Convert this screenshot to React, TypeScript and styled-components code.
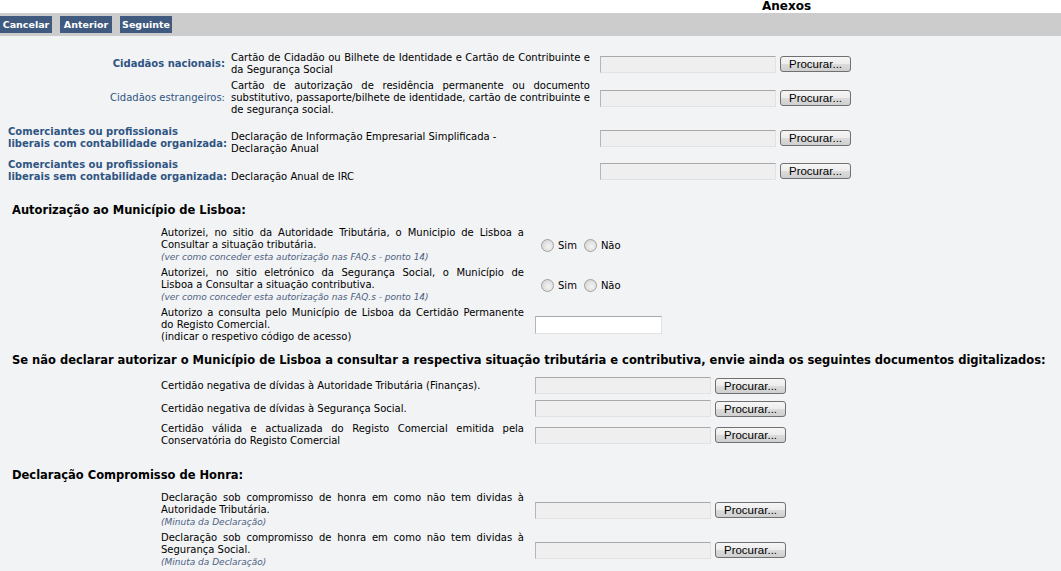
import * as React from "react";
import styled, { createGlobalStyle } from "styled-components";

const GlobalStyle = createGlobalStyle`
  html, body {
    margin: 0;
    padding: 0;
    background: #f2f3f5;
  }
  body {
    font-family: "DejaVu Sans", Verdana, sans-serif;
    font-size: 10px;
    color: #000;
  }
`;

interface DocItem {
  label: string[];
  labelAlign: "left" | "right";
  bold: boolean;
  lines: string[];
  justify: boolean;
  gap: number;
  drop?: number;
}

const DOCS: DocItem[] = [
  {
    label: ["Cidadãos nacionais:"],
    labelAlign: "right",
    bold: true,
    lines: [
      "Cartão de Cidadão ou Bilhete de Identidade e Cartão de Contribuinte e",
      "da Segurança Social",
    ],
    justify: true,
    gap: 0,
  },
  {
    label: ["Cidadãos estrangeiros:"],
    labelAlign: "right",
    bold: false,
    lines: [
      "Cartão de autorização de residência permanente ou documento",
      "substitutivo, passaporte/bilhete de identidade, cartão de contribuinte e",
      "de segurança social.",
    ],
    justify: true,
    gap: 4,
  },
  {
    label: ["Comerciantes ou profissionais", "liberais com contabilidade organizada:"],
    labelAlign: "left",
    bold: true,
    lines: ["Declaração de Informação Empresarial Simplificada -", "Declaração Anual"],
    justify: false,
    gap: 10,
    drop: 5,
  },
  {
    label: ["Comerciantes ou profissionais", "liberais sem contabilidade organizada:"],
    labelAlign: "left",
    bold: true,
    lines: ["Declaração Anual de IRC"],
    justify: false,
    gap: 9,
    drop: 0,
  },
];

const Lines: React.FC<{ lines: string[]; justify: boolean }> = ({ lines, justify }) => (
  <>
    {lines.map((l, i) => (
      <Line key={i} $justify={justify && i < lines.length - 1}>
        {l}
      </Line>
    ))}
  </>
);

const FileField: React.FC = () => (
  <FileWrap>
    <FileBox readOnly />
    <BrowseButton type="button">Procurar...</BrowseButton>
  </FileWrap>
);

const YesNo: React.FC<{ name: string }> = ({ name }) => (
  <RadioGroup>
    <Radio type="radio" name={name} />
    <RadioLabel>Sim</RadioLabel>
    <Radio type="radio" name={name} $spaced />
    <RadioLabel>Não</RadioLabel>
  </RadioGroup>
);

const App: React.FC = () => (
  <Page>
    <GlobalStyle />
    <TitleBar>
      <Title>Anexos</Title>
    </TitleBar>
    <Toolbar>
      <NavButton>Cancelar</NavButton>
      <NavButton>Anterior</NavButton>
      <NavButton>Seguinte</NavButton>
    </Toolbar>

    <Content>
      <DocList>
        {DOCS.map((d, i) => (
          <DocRow key={i} $gap={d.gap}>
            <DocLabel $align={d.labelAlign} $bold={d.bold}>
              {d.label.map((l, j) => (
                <div key={j}>{l}</div>
              ))}
            </DocLabel>
            <DocDesc $drop={d.drop}>
              <Lines lines={d.lines} justify={d.justify} />
            </DocDesc>
            <FileField />
          </DocRow>
        ))}
      </DocList>

      <SectionTitle $top={20}>Autorização ao Município de Lisboa:</SectionTitle>
      <SubList $gap={4}>
        <SubRow>
          <SubDesc>
            <Lines
              lines={[
                "Autorizei, no sitio da Autoridade Tributária, o Municipio de Lisboa a",
                "Consultar a situação tributária.",
              ]}
              justify
            />
            <Note>(ver como conceder esta autorização nas FAQ.s - ponto 14)</Note>
          </SubDesc>
          <YesNo name="at" />
        </SubRow>
        <SubRow>
          <SubDesc>
            <Lines
              lines={[
                "Autorizei, no sitio eletrónico da Segurança Social, o Município de",
                "Lisboa a Consultar a situação contributiva.",
              ]}
              justify
            />
            <Note>(ver como conceder esta autorização nas FAQ.s - ponto 14)</Note>
          </SubDesc>
          <YesNo name="ss" />
        </SubRow>
        <SubRow>
          <SubDesc>
            <Lines
              lines={[
                "Autorizo a consulta pelo Município de Lisboa da Certidão Permanente",
                "do Registo Comercial.",
              ]}
              justify
            />
            <Line $justify={false}>(indicar o respetivo código de acesso)</Line>
          </SubDesc>
          <CodeInput />
        </SubRow>
      </SubList>

      <SectionTitle $top={10}>
        Se não declarar autorizar o Município de Lisboa a consultar a respectiva situação
        tributária e contributiva, envie ainda os seguintes documentos digitalizados:
      </SectionTitle>
      <SubList $gap={6}>
        <SubRow>
          <SubDesc>
            <Line $justify={false}>Certidão negativa de dívidas à Autoridade Tributária (Finanças).</Line>
          </SubDesc>
          <FileField />
        </SubRow>
        <SubRow>
          <SubDesc>
            <Line $justify={false}>Certidão negativa de dívidas à Segurança Social.</Line>
          </SubDesc>
          <FileField />
        </SubRow>
        <SubRow>
          <SubDesc>
            <Lines
              lines={[
                "Certidão válida e actualizada do Registo Comercial emitida pela",
                "Conservatória do Registo Comercial",
              ]}
              justify
            />
          </SubDesc>
          <FileField />
        </SubRow>
      </SubList>

      <SectionTitle $top={21}>Declaração Compromisso de Honra:</SectionTitle>
      <SubList $gap={4}>
        <SubRow>
          <SubDesc>
            <Lines
              lines={[
                "Declaração sob compromisso de honra em como não tem dividas à",
                "Autoridade Tributária.",
              ]}
              justify
            />
            <Note>(Minuta da Declaração)</Note>
          </SubDesc>
          <FileField />
        </SubRow>
        <SubRow>
          <SubDesc>
            <Lines
              lines={[
                "Declaração sob compromisso de honra em como não tem dividas à",
                "Segurança Social.",
              ]}
              justify
            />
            <Note>(Minuta da Declaração)</Note>
          </SubDesc>
          <FileField />
        </SubRow>
      </SubList>
    </Content>
  </Page>
);

export default App;

const Page = styled.div`
  width: 1061px;
  min-height: 571px;
  background: #f2f3f5;
`;

const TitleBar = styled.div`
  height: 13px;
  background: #fff;
  padding-left: 762px;
`;

const Title = styled.div`
  font-size: 12px;
  font-weight: bold;
  line-height: 13px;
  color: #000;
`;

const Toolbar = styled.div`
  height: 23px;
  background: #cccccc;
  display: flex;
  align-items: center;
  gap: 8px;
`;

const NavButton = styled.div`
  width: 52px;
  height: 17px;
  line-height: 17px;
  text-align: center;
  background: #3f5a7e;
  color: #fff;
  font-weight: bold;
  font-size: 9.5px;
`;

const Content = styled.div`
  padding: 16px 0 0;
`;

const DocList = styled.div`
  padding-left: 8px;
`;

const DocRow = styled.div<{ $gap: number }>`
  display: flex;
  align-items: center;
  margin-top: ${(p) => p.$gap}px;
`;

const DocLabel = styled.div<{ $align: "left" | "right"; $bold: boolean }>`
  width: 217px;
  flex: none;
  white-space: nowrap;
  text-align: ${(p) => p.$align};
  font-weight: ${(p) => (p.$bold ? "bold" : "normal")};
  font-size: 10px;
  line-height: 12px;
  color: #2f5583;
`;

const DocDesc = styled.div<{ $drop?: number }>`
  width: 359px;
  flex: none;
  margin: 0 10px 0 6px;
  line-height: 12px;
  align-self: ${(p) => (p.$drop !== undefined ? "flex-end" : "center")};
  margin-bottom: ${(p) => -(p.$drop ?? 0)}px;
`;

const Line = styled.div<{ $justify: boolean }>`
  white-space: nowrap;
  text-align: ${(p) => (p.$justify ? "justify" : "left")};
  text-align-last: ${(p) => (p.$justify ? "justify" : "auto")};
`;

const Note = styled.div`
  font-style: italic;
  font-size: 9px;
  color: #4c5f82;
  line-height: 12px;
`;

const SectionTitle = styled.div<{ $top: number }>`
  margin-top: ${(p) => p.$top}px;
  padding-left: 12px;
  font-size: 11.5px;
  font-weight: bold;
  line-height: 14px;
  white-space: nowrap;
`;

const SubList = styled.div<{ $gap: number }>`
  display: flex;
  flex-direction: column;
  gap: ${(p) => p.$gap}px;
  padding: 10px 0 0 161px;
`;

const SubRow = styled.div`
  display: flex;
  align-items: center;
`;

const SubDesc = styled.div`
  width: 363px;
  flex: none;
  margin-right: 11px;
  line-height: 12px;
`;

const FileWrap = styled.div`
  display: flex;
  align-items: center;
  gap: 4px;
`;

const FileBox = styled.input`
  box-sizing: border-box;
  width: 176px;
  height: 17px;
  margin: 0;
  padding: 0;
  background: #efefef;
  border: 1px solid;
  border-color: #a9a9a9 #e2e2e2 #e2e2e2 #b5b5b5;
  outline: none;
`;

const BrowseButton = styled.button`
  box-sizing: border-box;
  width: 71px;
  height: 16px;
  margin: 0;
  padding: 0;
  border: 1px solid #707070;
  border-radius: 3px;
  background: linear-gradient(#f6f6f6, #ececec 50%, #dcdcdc 51%, #cfcfcf);
  font-family: "Liberation Sans", Arial, sans-serif;
  font-size: 11.5px;
  line-height: 14px;
  color: #000;
`;

const CodeInput = styled.input`
  box-sizing: border-box;
  width: 127px;
  height: 18px;
  margin: 0;
  padding: 0;
  background: #fff;
  border: 1px solid;
  border-color: #a9a9a9 #e2e2e2 #e2e2e2 #b5b5b5;
  outline: none;
`;

const RadioGroup = styled.div`
  display: flex;
  align-items: center;
  padding-left: 6px;
`;

const Radio = styled.input<{ $spaced?: boolean }>`
  appearance: none;
  box-sizing: border-box;
  width: 13px;
  height: 13px;
  margin: 0 0 0 ${(p) => (p.$spaced ? 7 : 0)}px;
  border-radius: 50%;
  border: 1px solid #a0a0a0;
  background: radial-gradient(circle at 60% 60%, #f4f4f4 0%, #e0e0e0 55%, #c9c9c9 100%);
`;

const RadioLabel = styled.span`
  margin-left: 4px;
  font-size: 10px;
`;
